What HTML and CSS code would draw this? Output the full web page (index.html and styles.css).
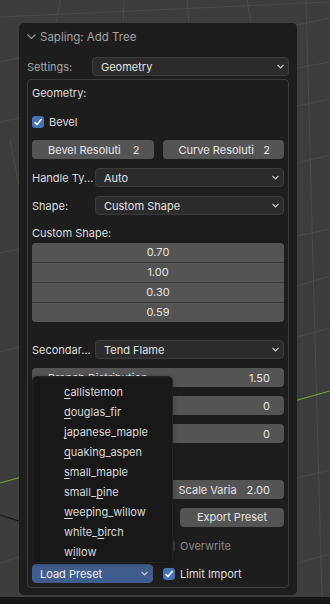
FILE: index.html
```html
<!DOCTYPE html>
<html lang="en">
<head>
    <meta charset="UTF-8">
    <title>Sapling: Add Tree</title>
    <link rel="stylesheet" href="styles.css">
</head>
<body>

    <div class="viewport">
        <!-- 3D view grid behind the panel -->
        <svg class="grid" width="330" height="597" viewBox="0 0 330 597">
            <g stroke="#4b4b4b" stroke-width="1" fill="none">
                <line x1="0" y1="17" x2="330" y2="2"/>
                <line x1="60" y1="0" x2="56" y2="24"/>
                <line x1="124" y1="0" x2="123" y2="24"/>
                <line x1="187" y1="0" x2="189" y2="24"/>
                <line x1="247" y1="0" x2="251" y2="24"/>
                <line x1="306" y1="0" x2="322" y2="600"/>
                <line x1="297" y1="25" x2="330" y2="18"/>
                <line x1="297" y1="68" x2="330" y2="62"/>
                <line x1="297" y1="106" x2="330" y2="99"/>
                <line x1="297" y1="163" x2="330" y2="155"/>
                <line x1="297" y1="236" x2="330" y2="229"/>
                <line x1="297" y1="286" x2="330" y2="276"/>
                <line x1="297" y1="337" x2="330" y2="328"/>
                <line x1="297" y1="478" x2="330" y2="470"/>
                <line x1="297" y1="563" x2="330" y2="554"/>
                <line x1="0" y1="62" x2="19" y2="58"/>
                <line x1="0" y1="122" x2="19" y2="118"/>
                <line x1="0" y1="253" x2="19" y2="249"/>
                <line x1="0" y1="352" x2="19" y2="347"/>
                <line x1="0" y1="563" x2="19" y2="557"/>
                <line x1="10" y1="140" x2="19" y2="185"/>
            </g>
            <line x1="0" y1="483" x2="330" y2="391" stroke="#76a532" stroke-width="1.2"/>
            <line x1="0" y1="515" x2="19" y2="521" stroke="#141414" stroke-width="1"/>
        </svg>

        <div class="panel">
            <div class="panel-head">
                <svg class="head-chevron" width="9" height="6" viewBox="0 0 9 6">
                    <polyline points="0.5,0.5 4.5,4.5 8.5,0.5" fill="none" stroke="#9a9a9a" stroke-width="1.1"/>
                </svg>
                <span>Sapling: Add Tree</span>
            </div>

            <div class="prop settings-row">
                <span class="prop-label dim">Settings:</span>
                <div class="menu">
                    <span>Geometry</span>
                    <svg class="chev" width="7" height="5" viewBox="0 0 7 5"><polyline points="0.5,0.8 3.5,3.8 6.5,0.8"/></svg>
                </div>
            </div>

            <div class="box">
                <div class="text-row">Geometry:</div>

                <div class="check-row">
                    <span class="tick on">
                        <svg width="12" height="12" viewBox="0 0 12 12"><polyline points="2.6,6.2 5,8.6 9.6,3"/></svg>
                    </span>
                    <span>Bevel</span>
                </div>

                <div class="pair">
                    <div class="num"><span>Bevel Resoluti</span><span>2</span></div>
                    <div class="num"><span>Curve Resoluti</span><span>2</span></div>
                </div>

                <div class="prop">
                    <span class="prop-label">Handle Ty...</span>
                    <div class="menu">
                        <span>Auto</span>
                        <svg class="chev" width="7" height="5" viewBox="0 0 7 5"><polyline points="0.5,0.8 3.5,3.8 6.5,0.8"/></svg>
                    </div>
                </div>

                <div class="prop">
                    <span class="prop-label">Shape:</span>
                    <div class="menu">
                        <span>Custom Shape</span>
                        <svg class="chev" width="7" height="5" viewBox="0 0 7 5"><polyline points="0.5,0.8 3.5,3.8 6.5,0.8"/></svg>
                    </div>
                </div>

                <div class="group">
                    <div class="text-row">Custom Shape:</div>
                    <div class="stack">
                        <div class="cell">0.70</div>
                        <div class="cell">1.00</div>
                        <div class="cell">0.30</div>
                        <div class="cell">0.59</div>
                    </div>
                </div>

                <div class="prop after-stack">
                    <span class="prop-label">Secondar...</span>
                    <div class="menu">
                        <span>Tend Flame</span>
                        <svg class="chev" width="7" height="5" viewBox="0 0 7 5"><polyline points="0.5,0.8 3.5,3.8 6.5,0.8"/></svg>
                    </div>
                </div>

                <div class="num"><span>Branch Distribution</span><span>1.50</span></div>
                <div class="num"><span>Branch Rings</span><span>0</span></div>
                <div class="num"><span>Random Seed</span><span>0</span></div>

                <div class="text-row">Tree Scale:</div>
                <div class="pair">
                    <div class="num"><span>Scale</span><span>13.00</span></div>
                    <div class="num"><span>Scale Varia</span><span>2.00</span></div>
                </div>

                <div class="pair">
                    <div class="field"></div>
                    <div class="button export">Export Preset</div>
                </div>

                <div class="pair">
                    <div class="spacer"></div>
                    <div class="check-row half disabled">
                        <span class="tick"></span>
                        <span>Overwrite</span>
                    </div>
                </div>

                <div class="pair">
                    <div class="menu preset">
                        <span>Load Preset</span>
                        <svg class="chev" width="7" height="5" viewBox="0 0 7 5"><polyline points="0.5,0.8 3.5,3.8 6.5,0.8"/></svg>
                    </div>
                    <div class="check-row half">
                        <span class="tick on">
                            <svg width="12" height="12" viewBox="0 0 12 12"><polyline points="2.6,6.2 5,8.6 9.6,3"/></svg>
                        </span>
                        <span>Limit Import</span>
                    </div>
                </div>
            </div>
        </div>

        <!-- open "Load Preset" menu -->
        <div class="popup">
            <div class="item"><u>c</u>allistemon</div>
            <div class="item"><u>d</u>ouglas_fir</div>
            <div class="item"><u>j</u>apanese_maple</div>
            <div class="item"><u>q</u>uaking_aspen</div>
            <div class="item"><u>s</u>mall_maple</div>
            <div class="item">small_<u>p</u>ine</div>
            <div class="item"><u>w</u>eeping_willow</div>
            <div class="item">white_<u>b</u>irch</div>
            <div class="item">w<u>i</u>llow</div>
        </div>
    </div>

    <div class="statusbar"></div>

</body>
</html>
```

FILE: styles.css
```css
/* Reset */
* {
    margin: 0;
    padding: 0;
    box-sizing: border-box;
}

html, body {
    width: 330px;
    height: 604px;
    overflow: hidden;
}

body {
    font-family: Inter, "Noto Sans", sans-serif;
    font-size: 11px;
    color: #dddddd;
    background-color: #161616;
    display: flex;
    flex-direction: column;
}

/* 3D viewport */
.viewport {
    position: relative;
    flex: 1;
    background-color: #3d3d3d;
    padding: 23px 0 0 19px;
}

.grid {
    position: absolute;
    left: 0;
    top: 0;
}

.statusbar {
    height: 7px;
    background-color: #171717;
}

/* Operator panel */
.panel {
    position: relative;
    width: 278px;
    height: 572px;
    background-color: #1d1d1d;
    border-radius: 5px;
    padding: 0 8px;
}

.panel-head {
    height: 27px;
    display: flex;
    align-items: center;
    color: #a3a3a3;
    font-size: 11.5px;
}

.head-chevron {
    margin: 0 4px 0 0;
}

.prop {
    display: flex;
    align-items: center;
    height: 19px;
}

.settings-row {
    margin-top: 7px;
}

.prop-label {
    width: 63px;
    flex-shrink: 0;
    white-space: nowrap;
}

.settings-row .prop-label {
    width: 65px;
}

.dim {
    color: #a6a6a6;
}

.menu {
    flex: 1;
    height: 19px;
    display: flex;
    align-items: center;
    justify-content: space-between;
    padding: 0 4px 0 8px;
    background-color: #2b2b2b;
    border: 1px solid #3b3b3b;
    border-radius: 4px;
    color: #e2e2e2;
}

.chev {
    fill: none;
    stroke: #cfcfcf;
    stroke-width: 1.2;
}

/* Box with the page settings */
.box {
    margin-top: 3px;
    height: 509px;
    border: 1px solid #3a3a3a;
    border-radius: 4px;
    padding: 4px;
    display: flex;
    flex-direction: column;
    gap: 9px;
}

.text-row {
    height: 19px;
    line-height: 19px;
    flex-shrink: 0;
}

.check-row {
    display: flex;
    align-items: center;
    height: 19px;
}

.tick {
    width: 12px;
    height: 12px;
    border-radius: 3px;
    background-color: #545454;
    margin-right: 5px;
    display: flex;
}

.tick.on {
    background-color: #4772b3;
}

.tick svg {
    fill: none;
    stroke: #ffffff;
    stroke-width: 1.6;
}

.pair {
    display: flex;
    gap: 9px;
    height: 19px;
    flex-shrink: 0;
}

.pair > * {
    flex: 1;
}

.num {
    height: 19px;
    flex-shrink: 0;
    display: flex;
    align-items: center;
    justify-content: space-between;
    padding: 0 14px 0 16px;
    background-color: #545454;
    border-radius: 4px;
    color: #e6e6e6;
    white-space: nowrap;
}

.group {
    flex-shrink: 0;
}

.stack {
    display: flex;
    flex-direction: column;
    gap: 1px;
    background-color: #3a3a3a;
    border-radius: 4px;
    overflow: hidden;
}

.stack .cell {
    height: 19px;
    line-height: 19px;
    text-align: center;
    background-color: #545454;
    color: #e6e6e6;
}

.after-stack {
    margin-top: 9px;
}

.field {
    height: 19px;
    background-color: #1f1f1f;
    border-radius: 4px;
}

.button {
    height: 19px;
    line-height: 19px;
    text-align: center;
    background-color: #545454;
    border-radius: 4px;
    color: #e6e6e6;
}

.pair .export {
    flex: 0 0 104px;
    margin-left: 9px;
}

.check-row.half {
    padding-left: 1px;
}

.disabled {
    color: #8a8a8a;
}

.disabled .tick {
    background-color: #3a3a3a;
}

.menu.preset {
    flex: 0 0 121px;
    background-color: #405d8e;
    border-color: #405d8e;
    padding-left: 7px;
    color: #f0f0f0;
}

/* Preset menu that is open over the panel */
.popup {
    position: absolute;
    left: 32px;
    top: 376px;
    width: 141px;
    height: 187px;
    padding: 5px 0 0 31px;
    background-color: #181818;
    border: 1px solid #242424;
    border-radius: 5px;
    box-shadow: 0 1px 4px rgba(0, 0, 0, 0.35);
}

.popup .item {
    height: 20px;
    line-height: 20px;
    color: #d9d9d9;
}

.popup u {
    text-decoration-thickness: 1px;
    text-underline-offset: 2px;
}
```
